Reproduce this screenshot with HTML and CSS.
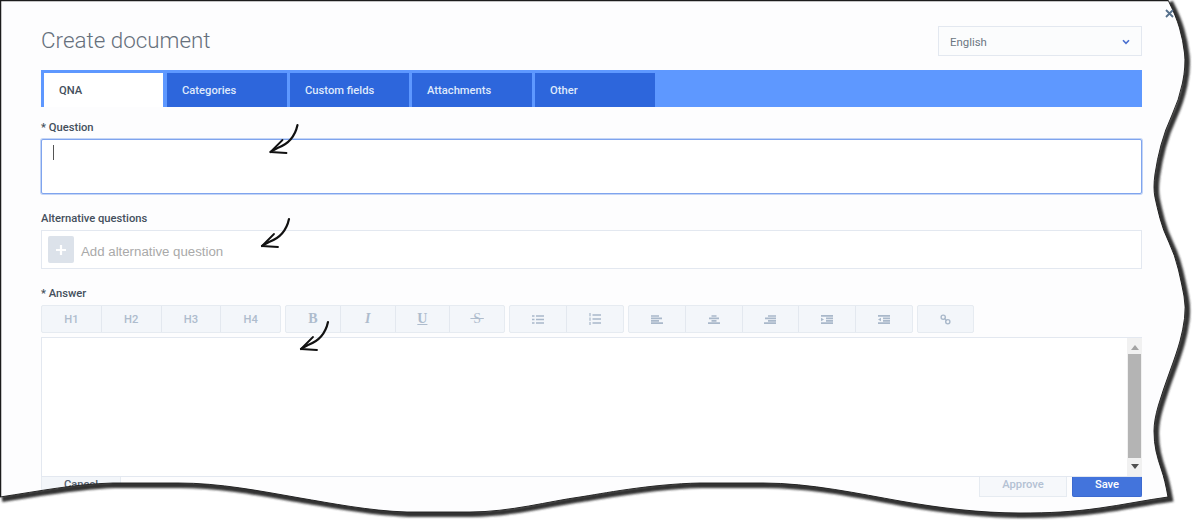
FILE: index.html
```html
<!DOCTYPE html>
<html lang="en">
<head>
<meta charset="utf-8">
<title>Create document</title>
<link rel="stylesheet" href="styles.css">
</head>
<body>
<main class="page">
  <header class="head">
    <h1 class="title">Create document</h1>
    <div class="select">
      <span>English</span>
      <svg class="chev" width="8" height="6" viewBox="0 0 8 6"><path d="M1 1.200 4 4.400 7 1.200" fill="none" stroke="#4a70d0" stroke-width="1.600"/></svg>
    </div>
  </header>
  <nav class="tabs">
    <a class="tab active">QNA</a>
    <a class="tab">Categories</a>
    <a class="tab w119">Custom fields</a>
    <a class="tab">Attachments</a>
    <a class="tab">Other</a>
  </nav>
  <label class="label first">* Question</label>
  <div class="question"><span class="caret"></span></div>
  <label class="label alt">Alternative questions</label>
  <div class="altbox">
    <span class="plus"><svg width="12" height="12" viewBox="0 0 12 12"><path d="M6 1v10M1 6h10" stroke="#fff" stroke-width="2.200"/></svg></span>
    <span class="placeholder">Add alternative question</span>
  </div>
  <label class="label answer">* Answer</label>
  <div class="toolbar">
    <div class="group g240">
      <button class="tb">H1</button><button class="tb">H2</button><button class="tb">H3</button><button class="tb">H4</button>
    </div>
    <div class="group g220">
      <button class="tb fb">B</button><button class="tb fi">I</button><button class="tb fu">U</button><button class="tb fs">&thinsp;S&thinsp;</button>
    </div>
    <div class="group g115">
      <button class="tb"><svg class="ic" viewBox="0 0 12 9"><path d="M0 1h2.500M4 1h8M0 4.500h2.500M4 4.500h8M0 8h2.500M4 8h8"/></svg></button>
      <button class="tb"><svg class="ic tall" viewBox="0 0 12 12"><path class="thin" d="M1 0v3.200M1 4.500v3.200M1 9v3"/><path d="M3.500 2h8.500M3.500 6h8.500M3.500 10h8.500"/></svg></button>
    </div>
    <div class="group g285">
      <button class="tb"><svg class="ic" viewBox="0 0 12 9"><path d="M0 1h8M0 3.400h11M0 5.800h8M0 8.200h12"/></svg></button>
      <button class="tb"><svg class="ic" viewBox="0 0 12 9"><path d="M3.500 1h5M1 3.400h10M3.500 5.800h5M0 8.200h12"/></svg></button>
      <button class="tb"><svg class="ic" viewBox="0 0 12 9"><path d="M4 1h8M1 3.400h11M4 5.800h8M0 8.200h12"/></svg></button>
      <button class="tb"><svg class="ic" viewBox="0 0 12 9"><path d="M0 .8h12M5 3.400h7M5 5.800h7M0 8.200h12"/><path class="fill" d="M0 2.700l3 1.800-3 1.800z"/></svg></button>
      <button class="tb"><svg class="ic" viewBox="0 0 12 9"><path d="M0 .8h12M5 3.400h7M5 5.800h7M0 8.200h12"/><path class="fill" d="M3 2.700L0 4.500l3 1.800z"/></svg></button>
    </div>
    <div class="group g57">
      <button class="tb"><svg class="ic link" viewBox="0 0 12 12"><circle cx="3.500" cy="3.500" r="2.300"/><circle cx="8.500" cy="8.500" r="2.300"/><path d="M4.500 4.500l3 3"/></svg></button>
    </div>
  </div>
  <div class="editor">
    <div class="scroll">
      <svg class="arrow-ic" width="8" height="5" viewBox="0 0 8 5"><path d="M0 5 4 0l4 5z" fill="#a3a3a3"/></svg>
      <div class="thumb"></div>
      <svg class="arrow-ic" width="8" height="5" viewBox="0 0 8 5"><path d="M0 0h8L4 5z" fill="#505050"/></svg>
    </div>
  </div>
  <footer class="foot">
    <button class="btn cancel">Cancel</button>
    <div class="right">
      <button class="btn approve">Approve</button>
      <button class="btn save">Save</button>
    </div>
  </footer>
</main>
<svg class="overlay" width="1200" height="528" viewBox="0 0 1200 528" aria-hidden="true">
  <defs>
    <path id="edge" d="M1168 0Q1176 16 1179.500 28Q1183 40 1184.500 53Q1186 66 1182.500 83Q1179 100 1172 115Q1165 130 1161 145Q1157 160 1155 174Q1153 188 1155 197.500Q1157 207 1160 218.500Q1163 230 1169 242.500Q1175 255 1178.500 270Q1182 285 1184 296Q1186 307 1184.500 318.500Q1183 330 1180 341Q1177 352 1170 371Q1163 390 1158.500 405Q1154 420 1154 431Q1154 442 1156 451Q1158 460 1161.500 470Q1165 480 1168 497C1146 500 1122 505 1100 508C1072 512 1050 513 1020 513C980 513 940 508 900 501C860 494 810 483 763 483L700 483C650 484 600 494 580 497C550 501 510 512 470 512L407 512C370 511 330 503 300 498C260 491 220 483 178 483L113 483C75 484 40 491 0 497"/>
    <clipPath id="outside">
      <path d="M1168 0Q1176 16 1179.500 28Q1183 40 1184.500 53Q1186 66 1182.500 83Q1179 100 1172 115Q1165 130 1161 145Q1157 160 1155 174Q1153 188 1155 197.500Q1157 207 1160 218.500Q1163 230 1169 242.500Q1175 255 1178.500 270Q1182 285 1184 296Q1186 307 1184.500 318.500Q1183 330 1180 341Q1177 352 1170 371Q1163 390 1158.500 405Q1154 420 1154 431Q1154 442 1156 451Q1158 460 1161.500 470Q1165 480 1168 497C1146 500 1122 505 1100 508C1072 512 1050 513 1020 513C980 513 940 508 900 501C860 494 810 483 763 483L700 483C650 484 600 494 580 497C550 501 510 512 470 512L407 512C370 511 330 503 300 498C260 491 220 483 178 483L113 483C75 484 40 491 0 497V528H1200V0Z"/>
    </clipPath>
    <filter id="blur" x="-5%" y="-5%" width="110%" height="110%"><feGaussianBlur stdDeviation="1.100"/></filter>
    <g id="arrow" fill="none" stroke="#111" stroke-linecap="round" stroke-linejoin="round">
      <path stroke-width="2.200" d="M0 0C-1.500 7-6 18-20 23C-23 24.500-25 26-27 27"/>
      <path stroke-width="1.800" d="M-15 15-27 27-11 28"/>
    </g>
  </defs>
  <path class="cover" d="M1168 0Q1176 16 1179.500 28Q1183 40 1184.500 53Q1186 66 1182.500 83Q1179 100 1172 115Q1165 130 1161 145Q1157 160 1155 174Q1153 188 1155 197.500Q1157 207 1160 218.500Q1163 230 1169 242.500Q1175 255 1178.500 270Q1182 285 1184 296Q1186 307 1184.500 318.500Q1183 330 1180 341Q1177 352 1170 371Q1163 390 1158.500 405Q1154 420 1154 431Q1154 442 1156 451Q1158 460 1161.500 470Q1165 480 1168 497C1146 500 1122 505 1100 508C1072 512 1050 513 1020 513C980 513 940 508 900 501C860 494 810 483 763 483L700 483C650 484 600 494 580 497C550 501 510 512 470 512L407 512C370 511 330 503 300 498C260 491 220 483 178 483L113 483C75 484 40 491 0 497V528H1200V0Z" fill="#fff"/>
  <g clip-path="url(#outside)">
    <use href="#edge" x="2" y="2" fill="none" stroke="#333" stroke-width="6" filter="url(#blur)"/>
  </g>
  <use href="#edge" fill="none" stroke="#141414" stroke-width="0.900"/>
  <path d="M.5 497V.5H1168" fill="none" stroke="#1c1c1c" stroke-width="1.500"/>
  <use href="#arrow" x="297.500" y="125"/>
  <use href="#arrow" x="289" y="219"/>
  <use href="#arrow" x="328" y="322"/>
  <path d="M1166 10l7 7M1173 10l-7 7" stroke="#56708c" stroke-width="1.800"/>
</svg>
</body>
</html>
```
FILE: styles.css
```css
* { box-sizing: border-box; }
html, body { margin: 0; height: 528px; overflow: hidden; background: #fff; }
body { font-family: Roboto, "Liberation Sans", sans-serif; color: #444f5c; }
.page {
  width: 1200px;
  height: 528px;
  padding: 26px 58px 0 41px;
  background: #fdfdfe;
  display: flex;
  flex-direction: column;
  overflow: hidden;
}
.head { display: flex; justify-content: space-between; align-items: flex-start; height: 44px; }
.title { margin: 0; font-size: 22.4px; line-height: 28px; font-weight: 300; color: #66707c; }
.select {
  width: 204px;
  height: 30px;
  padding: 1px 11px 0;
  display: flex;
  align-items: center;
  justify-content: space-between;
  background: #fbfcfd;
  border: 1px solid #e3e8f0;
  font-size: 11.4px;
  color: #6b7682;
}
.tabs {
  width: 1101px;
  height: 37px;
  padding: 3px 0 0 3px;
  display: flex;
  gap: 3px;
  background: #5e98ff;
}
.tab {
  width: 120px;
  padding-left: 15px;
  font-size: 11.2px;
  font-weight: 500;
  line-height: 36px;
  color: #dfe9fb;
  background: #2d66dc;
}
.tab.active { width: 119px; margin-right: 1px; color: #444f5c; background: #fff; }
.tab.w119 { width: 119px; }
.label { display: block; font-size: 11.2px; font-weight: 500; line-height: 14px; color: #444f5c; }
.label.first { margin-top: 14px; }
.label.alt { margin-top: 18px; }
.label.answer { margin-top: 18px; }
.question {
  width: 1101px;
  height: 55px;
  margin-top: 4px;
  padding: 5px 11px;
  background: #fff;
  border: 1px solid #7fa4ee;
  border-radius: 2px;
  box-shadow: 0 0 0 1px rgba(127, 164, 238, 0.45);
}
.caret { display: block; width: 1px; height: 15px; background: #555; }
.altbox {
  width: 1101px;
  height: 39px;
  margin-top: 4px;
  padding: 5px 6px;
  display: flex;
  align-items: flex-start;
  gap: 7px;
  background: #fff;
  border: 1px solid #e3e8f0;
}
.plus {
  width: 26px;
  height: 27px;
  display: flex;
  align-items: center;
  justify-content: center;
  background: #dce2ea;
  border-radius: 2px;
}
.placeholder { font: 13.25px/32px "Liberation Sans", sans-serif; color: #a9a9a9; }
.toolbar { display: flex; gap: 4px; margin-top: 4px; height: 28px; }
.group {
  display: flex;
  background: #f3f6fa;
  border: 1px solid #e6ebf1;
  border-radius: 2px;
}
.g240 { width: 240px; }
.g220 { width: 220px; }
.g115 { width: 115px; }
.g285 { width: 285px; }
.g57 { width: 57px; }
.tb {
  flex: 1;
  display: flex;
  align-items: center;
  justify-content: center;
  padding: 0;
  height: 26px;
  background: transparent;
  border: 0;
  border-left: 1px solid #e3e8ef;
  font: 500 11.2px Roboto, sans-serif;
  color: #aebccd;
}
.tb:first-child { border-left: 0; }
.fb, .fi, .fu, .fs { font: 700 14px "Liberation Serif", serif; }
.fi { font-style: italic; }
.fu { text-decoration: underline; }
.fs { font-weight: 400; text-decoration: line-through; }
.ic { width: 12px; height: 9px; fill: none; stroke: #a9b8ca; stroke-width: 1.7; }
.ic.tall { height: 12px; }
.ic .thin { stroke-width: 1.2; }
.ic .fill { fill: #a9b8ca; stroke: none; }
.ic.link { width: 11px; height: 11px; stroke-width: 1.5; }
.editor {
  width: 1101px;
  height: 140px;
  margin-top: 4px;
  position: relative;
  z-index: 1;
  display: flex;
  justify-content: flex-end;
  background: #fff;
  border: 1px solid #e3e8f0;
  border-right: 0;
}
.scroll {
  width: 15px;
  display: flex;
  flex-direction: column;
  align-items: center;
  padding: 7px 0 4px;
  background: #f1f1f1;
}
.thumb { width: 13px; height: 104px; margin: 4px 0 6px; background: #b4b4b4; }
.foot { width: 1101px; display: flex; justify-content: space-between; }
.right { display: flex; gap: 5px; }
.btn {
  height: 20px;
  padding: 0 0 5px;
  border: 1px solid #e6ebf1;
  border-top: 0;
  font: 500 11.2px Roboto, sans-serif;
}
.cancel { width: 80px; background: #f3f6fa; color: #55606e; }
.approve { width: 88px; background: #f6f8fb; color: #b3c1d3; }
.save { width: 70px; background: #4374dc; border-color: #3c6ad0; color: #fff; border-radius: 0 0 2px 2px; }
.overlay { position: absolute; left: 0; top: 0; z-index: 2; pointer-events: none; }
```
